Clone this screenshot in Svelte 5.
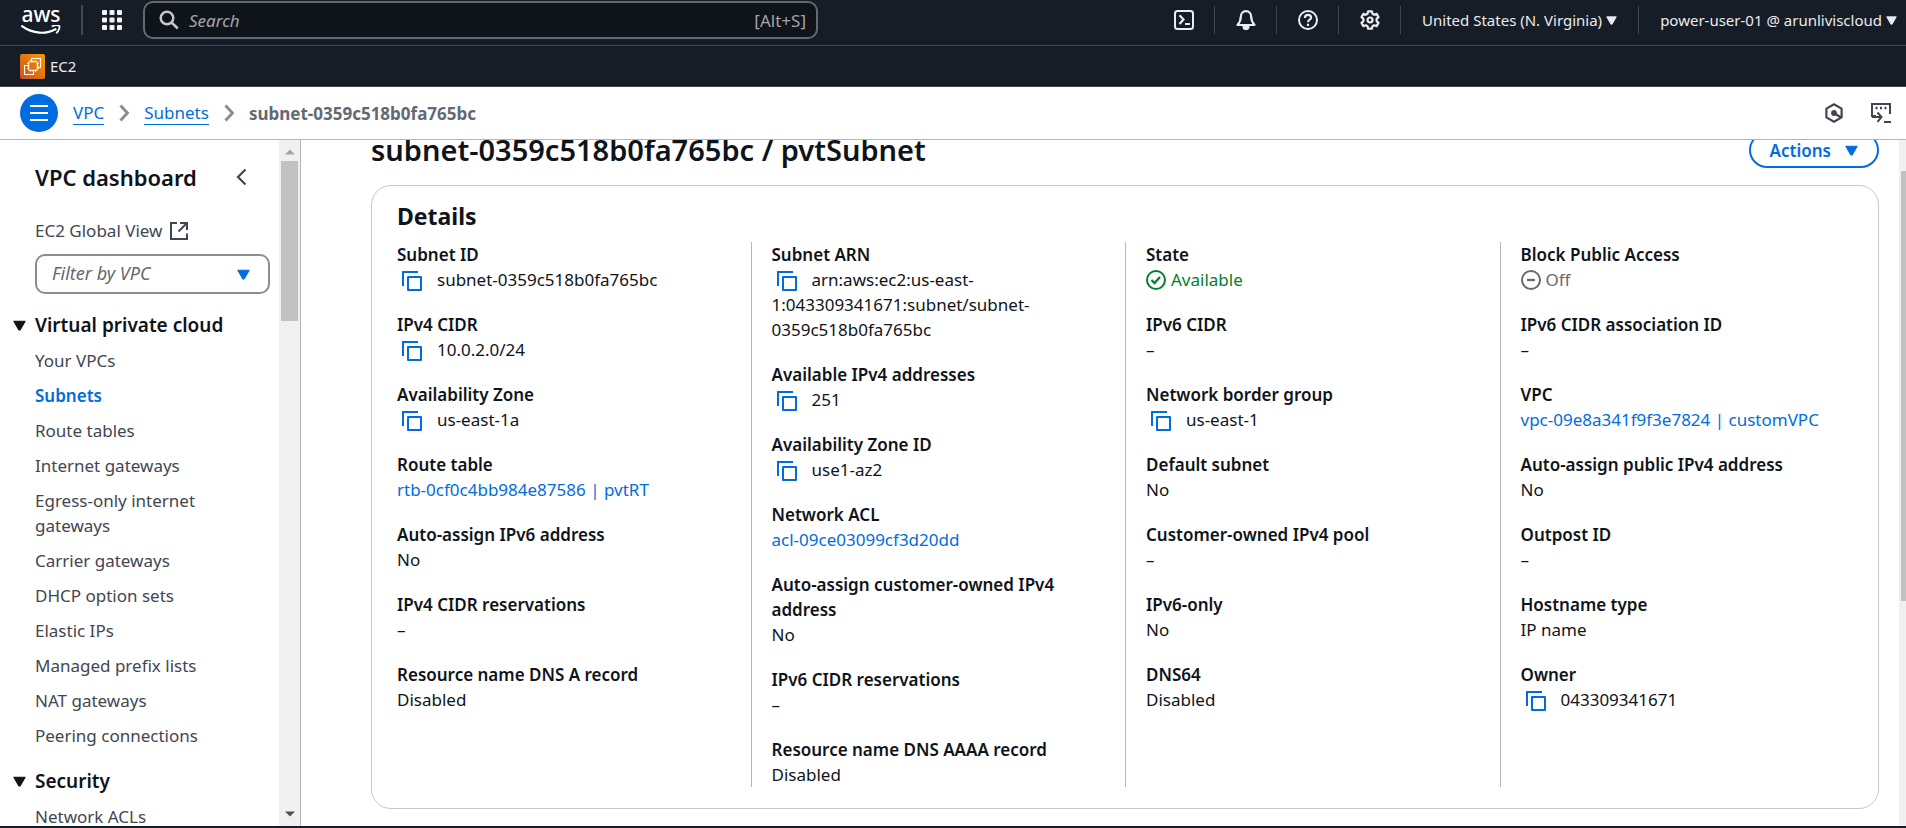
<script>
  const vpcLinks = [
    'Your VPCs', 'Subnets', 'Route tables', 'Internet gateways', 'Egress-only internet gateways',
    'Carrier gateways', 'DHCP option sets', 'Elastic IPs', 'Managed prefix lists', 'NAT gateways',
    'Peering connections'
  ];

  const columns = [
    [
      { label: 'Subnet ID', value: 'subnet-0359c518b0fa765bc', kind: 'copyable' },
      { label: 'IPv4 CIDR', value: '10.0.2.0/24', kind: 'copyable' },
      { label: 'Availability Zone', value: 'us-east-1a', kind: 'copyable' },
      { label: 'Route table', value: 'rtb-0cf0c4bb984e87586 | pvtRT', kind: 'link' },
      { label: 'Auto-assign IPv6 address', value: 'No' },
      { label: 'IPv4 CIDR reservations', value: '–' },
      { label: 'Resource name DNS A record', value: 'Disabled' }
    ],
    [
      { label: 'Subnet ARN', value: 'arn:aws:ec2:us-east-1:043309341671:subnet/subnet-0359c518b0fa765bc', kind: 'copyable' },
      { label: 'Available IPv4 addresses', value: '251', kind: 'copyable' },
      { label: 'Availability Zone ID', value: 'use1-az2', kind: 'copyable' },
      { label: 'Network ACL', value: 'acl-09ce03099cf3d20dd', kind: 'link' },
      { label: 'Auto-assign customer-owned IPv4 address', value: 'No' },
      { label: 'IPv6 CIDR reservations', value: '–' },
      { label: 'Resource name DNS AAAA record', value: 'Disabled' }
    ],
    [
      { label: 'State', value: 'Available', kind: 'ok' },
      { label: 'IPv6 CIDR', value: '–' },
      { label: 'Network border group', value: 'us-east-1', kind: 'copyable' },
      { label: 'Default subnet', value: 'No' },
      { label: 'Customer-owned IPv4 pool', value: '–' },
      { label: 'IPv6-only', value: 'No' },
      { label: 'DNS64', value: 'Disabled' }
    ],
    [
      { label: 'Block Public Access', value: 'Off', kind: 'off' },
      { label: 'IPv6 CIDR association ID', value: '–' },
      { label: 'VPC', value: 'vpc-09e8a341f9f3e7824 | customVPC', kind: 'link' },
      { label: 'Auto-assign public IPv4 address', value: 'No' },
      { label: 'Outpost ID', value: '–' },
      { label: 'Hostname type', value: 'IP name' },
      { label: 'Owner', value: '043309341671', kind: 'copyable' }
    ]
  ];
</script>

{#snippet caret(size)}
  <svg class="caret" width={size} height={size} viewBox="0 0 12 12" aria-hidden="true">
    <path d="M.8 2h10.400L6.700 10H5.300z" fill="currentColor" stroke="currentColor" stroke-linejoin="round" />
  </svg>
{/snippet}

<div class="app">
  <header class="topbar">
    <a class="logo" href="#home" aria-label="AWS home">
      <span>aws</span>
      <svg width="40" height="11" viewBox="0 0 40 11" aria-hidden="true">
        <path d="M1 1.2C12 9.2 25 9.4 34.5 4.2" fill="none" stroke="#fff" stroke-width="2.2" stroke-linecap="round" />
        <path d="M31.5 1.2c2.5-1 5.8-1 6.8-.3.6 1.2-.3 4.8-2.6 6.8" fill="none" stroke="#fff" stroke-width="1.8" stroke-linecap="round" stroke-linejoin="round" />
      </svg>
    </a>
    <button class="apps" aria-label="Services">
      <svg width="20" height="20" viewBox="0 0 20 20" fill="#f3f3f7">
        {#each [0, 7.5, 15] as y}
          {#each [0, 7.5, 15] as x}
            <rect {x} {y} width="5" height="5" rx="1" />
          {/each}
        {/each}
      </svg>
    </button>
    <label class="search">
      <svg width="20" height="20" viewBox="0 0 20 20" fill="none" stroke="#c6c6cd" stroke-width="2.5" aria-hidden="true">
        <circle cx="8" cy="8" r="6.3" /><path d="M12.5 12.5l6.3 6" />
      </svg>
      <input type="search" placeholder="Search" aria-label="Search" />
      <span>[Alt+S]</span>
    </label>
    <div class="tools">
      <button aria-label="CloudShell">
        <svg width="20" height="20" viewBox="0 0 20 20" fill="none" stroke="#ebebf0" stroke-width="2">
          <rect x="1" y="1" width="18" height="18" rx="2.5" /><path d="M5.5 5.3l4 4.2-4 4.4M11 14h5" stroke-width="2.2" />
        </svg>
      </button>
      <button aria-label="Notifications">
        <svg width="20" height="20" viewBox="0 0 20 20" fill="none" stroke="#ebebf0" stroke-width="2.2" stroke-linejoin="round">
          <path d="M10 1.2C6.600 1.200 4.800 3.800 4.800 6.800c0 4-1.300 6-3.300 8.200h17c-2-2.200-3.300-4.200-3.300-8.200 0-3-1.800-5.600-5.200-5.600z" /><path d="M7.500 16.500c0 3.400 5 3.400 5 0z" fill="#ebebf0" />
        </svg>
      </button>
      <button aria-label="Help">
        <svg width="20" height="20" viewBox="0 0 20 20" fill="none" stroke="#ebebf0" stroke-width="2">
          <circle cx="10" cy="10" r="9" /><path d="M6.900 8c0-2 1.300-3.100 3.100-3.100s3.100 1.100 3.100 2.800c0 2-3.100 2-3.100 4.500M10 13.700v2.300" stroke-width="2.200" />
        </svg>
      </button>
      <button aria-label="Settings">
        <svg width="20" height="20" viewBox="0 0 20 20" fill="none" stroke="#ebebf0" stroke-width="2.200" stroke-linejoin="round">
          <path d="M8.100 1.300h3.800l.6 2.500 1.600.9 2.500-.8 1.900 3.200-1.900 1.800v2.200l1.900 1.800-1.900 3.200-2.500-.8-1.600.9-.6 2.500H8.100l-.6-2.500-1.600-.9-2.500.8-1.900-3.200 1.900-1.800V8.900L1.500 7.100l1.900-3.200 2.500.8 1.600-.9z" /><circle cx="10" cy="10" r="2.500" />
        </svg>
      </button>
      <button class="menu">United States (N. Virginia) {@render caret(11)}</button>
      <button class="menu account">power-user-01 @ arunliviscloud {@render caret(11)}</button>
    </div>
  </header>

  <nav class="favorites" aria-label="Favorites">
    <a href="#ec2">
      <svg width="25" height="25" viewBox="0 0 25 25" aria-hidden="true">
        <defs><linearGradient id="ec2" x1="0" y1="1" x2="1" y2="0"><stop offset="0" stop-color="#c8511b" /><stop offset="1" stop-color="#f90" /></linearGradient></defs>
        <rect width="25" height="25" rx="2" fill="url(#ec2)" />
        <g fill="none" stroke="#fff" stroke-width="1.100">
          <path d="M11.500 7V4.500h9v9H18M8 11.500H4.500v9h9V17.500" />
          <rect x="8.700" y="7.700" width="8.600" height="8.600" rx="1" />
          <path d="M10.500 6v1.700M13 6v1.700M15.500 6v1.700M10.500 16.300V18M13 16.300V18M15.500 16.300V18M7 9.500h1.700M7 12h1.700M7 14.500h1.700M17.300 9.500H19M17.300 12H19M17.300 14.500H19" stroke-width=".8" />
        </g>
      </svg>
      EC2
    </a>
  </nav>

  <div class="crumbbar">
    <button class="burger" aria-label="Toggle navigation">
      <svg width="18" height="16" viewBox="0 0 18 16" stroke="#fff" stroke-width="2"><path d="M0 1h18M0 8h18M0 15h18" /></svg>
    </button>
    <nav class="crumbs" aria-label="Breadcrumb">
      <a href="#vpc">VPC</a>
      <svg width="10" height="18" viewBox="0 0 10 18" aria-hidden="true"><path d="M1.500 1.500L8.500 9l-7 7.500" /></svg>
      <a href="#subnets">Subnets</a>
      <svg width="10" height="18" viewBox="0 0 10 18" aria-hidden="true"><path d="M1.500 1.500L8.500 9l-7 7.500" /></svg>
      <span aria-current="page">subnet-0359c518b0fa765bc</span>
    </nav>
    <div class="panel-tools">
      <button aria-label="Amazon Q">
        <svg width="20" height="20" viewBox="0 0 20 20" fill="none" stroke="#424650" stroke-width="2.200" stroke-linejoin="round">
          <path d="M10 1.300l7.600 4.300v8.800L10 18.700l-7.600-4.300V5.600z" /><circle cx="10" cy="10" r="1.800" fill="#424650" /><path d="M10 10l7 4.500" />
        </svg>
      </button>
      <button aria-label="Console-to-code">
        <svg width="20" height="20" viewBox="0 0 20 20" fill="none" stroke="#424650" stroke-width="2">
          <path d="M5 13H1V1h18v10M1 14h9M6.500 9.500l4 4.500-4 4.800M13 19h7" /><path d="M4.500 5h2M9 5h2M13.500 5h2" stroke-width="2.500" />
        </svg>
      </button>
    </div>
  </div>

  <div class="body">
    <aside class="sidebar">
      <div class="side-content">
        <div class="side-title">
          <h2>VPC dashboard</h2>
          <button aria-label="Close navigation">
            <svg width="11" height="18" viewBox="0 0 11 18" fill="none" stroke="#424650" stroke-width="2.200"><path d="M9.500 1.500L2 9l7.500 7.500" /></svg>
          </button>
        </div>
        <a class="global" href="#global">
          EC2 Global View
          <svg width="18" height="18" viewBox="0 0 18 18" fill="none" stroke="#424650" stroke-width="2" aria-hidden="true">
            <path d="M7 1H1v16h16v-5.500M10 1h7v7M17 1L8.500 9.500" />
          </svg>
        </a>
        <div class="filter">
          <select aria-label="Filter by VPC"><option>Filter by VPC</option></select>
          {@render caret(13)}
        </div>
        <button class="section">{@render caret(13)}Virtual private cloud</button>
        <ul>
          {#each vpcLinks as link}
            <li><a href="#{link}" class:active={link === 'Subnets'}>{link}</a></li>
          {/each}
        </ul>
        <button class="section">{@render caret(13)}Security</button>
        <ul>
          <li><a href="#acls">Network ACLs</a></li>
        </ul>
      </div>
      <div class="scrollbar" aria-hidden="true">
        <svg width="10" height="6" viewBox="0 0 10 6"><path d="M0 5.500L5 .5l5 5z" fill="#a3a3a3" /></svg>
        <div class="thumb"></div>
        <svg width="10" height="6" viewBox="0 0 10 6"><path d="M0 .5l5 5 5-5z" fill="#505050" /></svg>
      </div>
    </aside>

    <main>
      <div class="page">
        <div class="page-head">
          <h1>subnet-0359c518b0fa765bc / pvtSubnet</h1>
          <button class="actions">Actions {@render caret(13)}</button>
        </div>
        <section class="card">
          <h2>Details</h2>
          <div class="columns">
            {#each columns as column}
              <dl>
                {#each column as item}
                  <div>
                    <dt>{item.label}</dt>
                    <dd class={item.kind}>
                      {#if item.kind === 'copyable'}
                        <button class="copy" aria-label="Copy {item.label}"><svg width="20" height="20" viewBox="0 0 20 20" fill="none" stroke="#006ce0" stroke-width="2"><path d="M1 15V1h15" /><rect x="6" y="6" width="13" height="13" stroke-linejoin="round" /></svg></button>{item.value}
                      {:else if item.kind === 'link'}
                        <a href="#{item.label}">{item.value}</a>
                      {:else if item.kind === 'ok'}
                        <svg width="20" height="20" viewBox="0 0 20 20" fill="none" stroke="#00802f" stroke-width="2"><circle cx="10" cy="10" r="9" /><path d="M5.500 10l3 3 5.500-6" stroke-width="2.300" /></svg>{item.value}
                      {:else if item.kind === 'off'}
                        <svg width="20" height="20" viewBox="0 0 20 20" fill="none" stroke="#656871" stroke-width="2"><circle cx="10" cy="10" r="9" /><path d="M6 10h8" stroke-width="2.300" /></svg>{item.value}
                      {:else}
                        {item.value}
                      {/if}
                    </dd>
                  </div>
                {/each}
              </dl>
            {/each}
          </div>
        </section>
      </div>
      <div class="scrollbar page-scroll" aria-hidden="true">
        <div class="thumb"></div>
      </div>
    </main>
  </div>
  <footer></footer>
</div>

<style>
  :global(body) { margin: 0; }
  .app {
    display: flex; flex-direction: column; height: 100vh; overflow: hidden;
    font: 17px/25px "Noto Sans", "Open Sans", sans-serif; color: #0f141a; background: #fff;
  }
  * { box-sizing: border-box; }
  button { font: inherit; color: inherit; background: none; border: 0; padding: 0; }
  svg { display: block; flex: none; }
  a { color: #006ce0; text-decoration: none; }
  h1, h2, ul, dl, dd { margin: 0; padding: 0; }

  .topbar { display: flex; align-items: center; flex: none; height: 46px; padding: 0 9px 5px 20px; background: #161d26; border-bottom: 1px solid #424650; color: #ebebf0; }
  .logo { display: flex; flex-direction: column; align-items: center; width: 42px; color: #fff; font-size: 21px; font-weight: 500; line-height: 18px; }
  .logo svg { margin-top: 2px; }
  .apps { display: flex; align-items: center; height: 30px; margin-left: 19px; padding-left: 19px; border-left: 2px solid #424650; }
  .search { display: flex; align-items: center; flex: 0 1 675px; min-width: 200px; height: 38px; margin-left: 21px; padding: 0 10px 0 14px; gap: 10px; background: #0f141a; border: 2px solid #656871; border-radius: 10px; color: #a4a4ad; }
  .search input { flex: 1; min-width: 0; padding: 0; border: 0; outline: 0; background: none; font: inherit; color: inherit; }
  .search input::placeholder { color: #a4a4ad; font-style: italic; opacity: 1; }
  .tools { display: flex; align-items: center; margin-left: auto; font-size: 15px; white-space: nowrap; }
  .tools button { display: flex; align-items: center; justify-content: center; width: 62px; height: 28px; border-right: 1px solid #424650; }
  .tools .menu { gap: 4px; width: auto; padding: 0 21px; }
  .tools .account { padding-right: 0; border: 0; }

  .favorites { display: flex; align-items: center; flex: none; height: 41px; padding: 0 20px; background: #161d26; border-bottom: 1px solid #424650; }
  .favorites a { display: flex; align-items: center; gap: 5px; color: #ebebf0; font-size: 15px; }

  .crumbbar { display: flex; align-items: center; flex: none; height: 53px; padding: 0 15px 0 20px; border-bottom: 1px solid #b4b4bb; }
  .burger { display: flex; align-items: center; justify-content: center; width: 38px; height: 38px; border-radius: 50%; background: #006ce0; }
  .crumbs { display: flex; align-items: center; gap: 15px; margin-left: 15px; }
  .crumbs a { line-height: 22px; border-bottom: 1px solid #006ce0; }
  .crumbs svg { fill: none; stroke: #8c8c94; stroke-width: 3; }
  .crumbs span { color: #656871; font-weight: 700; }
  .panel-tools { display: flex; gap: 27px; margin-left: auto; }

  .body { display: flex; flex: 1; min-height: 0; }
  .sidebar { display: flex; flex: none; width: 301px; overflow: hidden; border-right: 1px solid #b4b4bb; }
  .side-content { flex: 1; min-width: 0; padding: 22px 9px 0 35px; }
  .side-title { display: flex; align-items: center; justify-content: space-between; height: 30px; padding-right: 23px; }
  h2 { font-size: 22px; line-height: 30px; font-weight: 600; }
  .global { display: flex; align-items: center; gap: 8px; margin-top: 26px; color: #424650; }
  .filter { display: grid; align-items: center; margin-top: 11px; color: #006ce0; }
  .filter > :global(*) { grid-area: 1 / 1; }
  .filter :global(.caret) { justify-self: end; margin-right: 20px; pointer-events: none; }
  .filter select { appearance: none; width: 100%; height: 40px; padding: 0 40px 2px 15px; border: 2px solid #8c8c94; border-radius: 10px; background: #fff; color: #656871; font: inherit; font-size: 18px; font-style: italic; }
  .section { display: flex; align-items: center; gap: 9px; margin: 19px 0 10px -22px; font-size: 19px; font-weight: 600; white-space: nowrap; }
  ul { display: flex; flex-direction: column; gap: 10px; margin-bottom: 21px; list-style: none; }
  li a { display: block; max-width: 180px; color: #424650; }
  li a.active { color: #006ce0; font-weight: 600; }
  .scrollbar { display: flex; flex-direction: column; align-items: center; flex: none; width: 21px; padding: 9px 0; background: #f0f0f0; }
  .thumb { width: 17px; height: 160px; margin: 6px 0 auto; background: #c1c1c1; }

  main { display: flex; flex: 1; min-width: 0; overflow: hidden; }
  .page { flex: 1; min-width: 0; margin-top: -8px; padding: 0 20px 0 70px; }
  .page-head { display: flex; align-items: center; justify-content: space-between; }
  h1 { font-size: 29px; line-height: 36px; font-weight: 600; }
  .actions { display: flex; align-items: center; gap: 14px; height: 36px; padding: 0 19px; border: 2px solid #006ce0; border-radius: 18px; color: #006ce0; font-weight: 600; }
  .card { margin-top: 17px; padding: 15px 4px 21px; border: 1px solid #c6c6cd; border-radius: 20px; }
  .card h2 { margin: 0 21px 11px; font-size: 23px; font-weight: 700; }
  .columns { display: grid; grid-template-columns: repeat(4, minmax(0, 1fr)); }
  dl { display: flex; flex-direction: column; gap: 20px; padding: 0 50px 0 20px; border-left: 1px solid #b4b4bb; }
  dl:first-child { border-color: transparent; }
  dt { font-weight: 600; }
  .copy { display: inline-block; width: 40px; padding-left: 5px; vertical-align: -5px; }
  .ok, .off { display: flex; align-items: center; gap: 5px; }
  .ok { color: #00802f; }
  .off { color: #656871; }
  .page-scroll { width: 7px; align-items: flex-end; padding: 31px 0 0; }
  .page-scroll .thumb { width: 5px; height: 430px; margin: 0; }
  footer { flex: none; height: 2px; background: #161d26; }
</style>
